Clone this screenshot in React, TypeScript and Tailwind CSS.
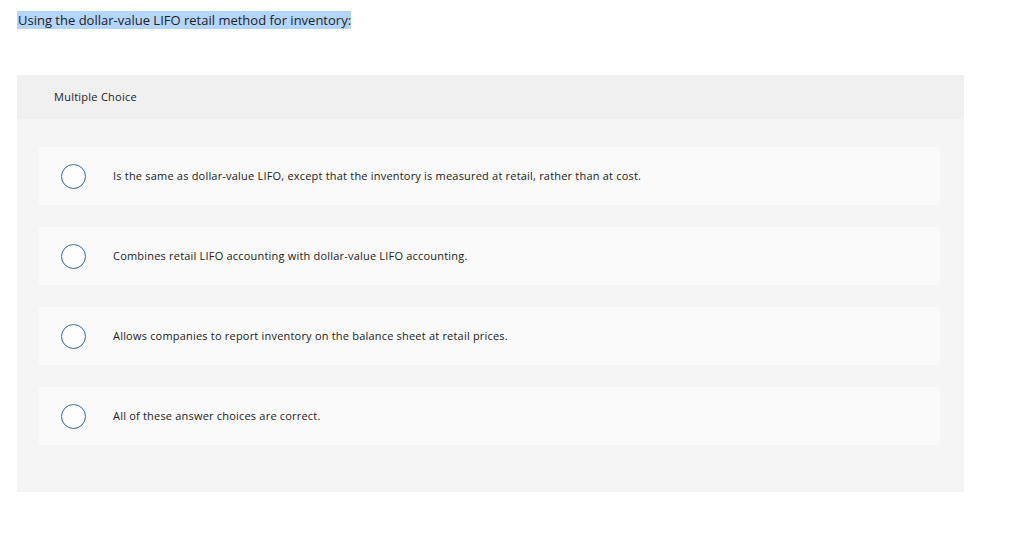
const choices = [
  'Is the same as dollar-value LIFO, except that the inventory is measured at retail, rather than at cost.',
  'Combines retail LIFO accounting with dollar-value LIFO accounting.',
  'Allows companies to report inventory on the balance sheet at retail prices.',
  'All of these answer choices are correct.',
]

// Question with its multiple choice answers; the prompt is shown as selected text.
export default function App() {
  return (
    <div className="min-h-[537px] bg-white text-[#222] font-['Open_Sans','Liberation_Sans',sans-serif]">
      <div className="px-[17px] pt-[9px]">
        <p className="text-[13px] leading-[22px]">
          <span className="bg-[#b4d5fe] pl-[1px]">Using the dollar-value LIFO retail method for inventory:</span>
        </p>
      </div>

      <div className="ml-[17px] mt-[44px] w-[947px] bg-[#f5f5f5]">
        <div className="flex h-[44px] items-center bg-[#f0f0f0] pl-[37px] text-[11px] tracking-[0.25px]">
          Multiple Choice
        </div>
        <div className="flex flex-col gap-[22px] pt-[28px] pb-[47px] pl-[22px] pr-[24px]">
          {choices.map((choice) => (
            <label key={choice} className="flex h-[58px] items-center rounded-[3px] bg-[#fafafa] pl-[22px]">
              <span className="h-[25px] w-[25px] shrink-0 rounded-full border border-[#3b6796] bg-white" />
              <span className="ml-[27px] text-[11px] tracking-[0.2px]">{choice}</span>
            </label>
          ))}
        </div>
      </div>
    </div>
  )
}
